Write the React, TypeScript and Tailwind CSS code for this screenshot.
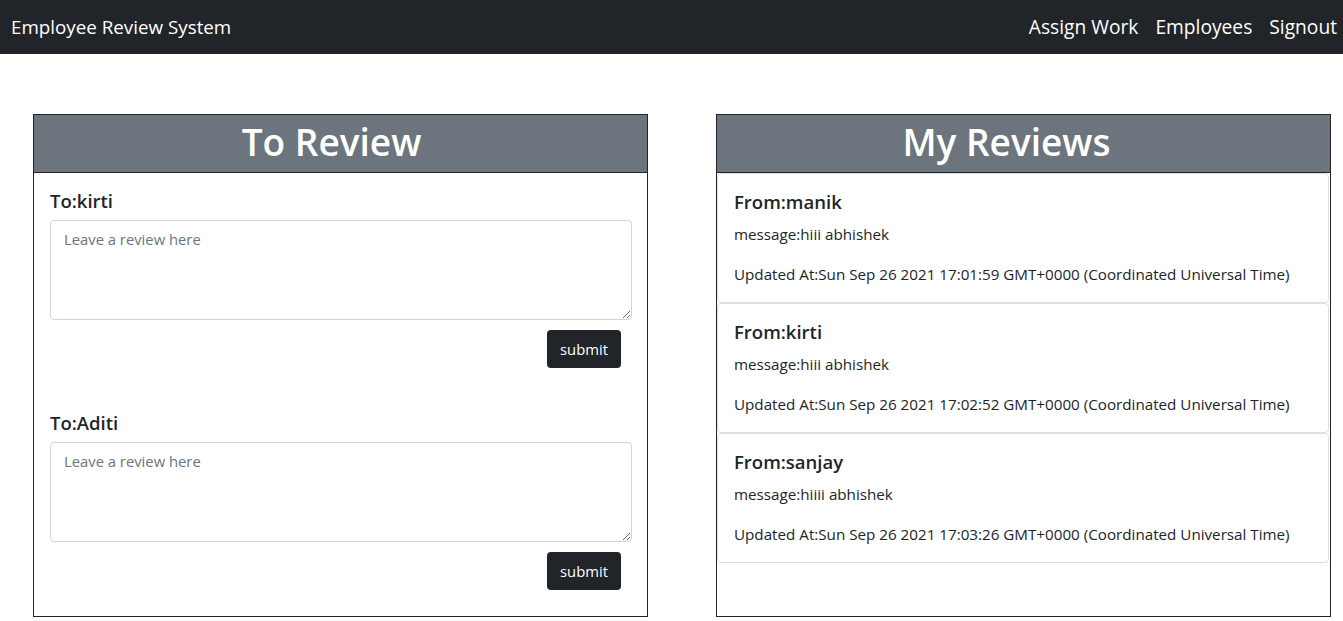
const reviews = [
  { from: "manik", message: "hiii abhishek", at: "Sun Sep 26 2021 17:01:59 GMT+0000 (Coordinated Universal Time)" },
  { from: "kirti", message: "hiii abhishek", at: "Sun Sep 26 2021 17:02:52 GMT+0000 (Coordinated Universal Time)" },
  { from: "sanjay", message: "hiiii abhishek", at: "Sun Sep 26 2021 17:03:26 GMT+0000 (Coordinated Universal Time)" },
];

const toReview = ["kirti", "Aditi"];

const App = () => {
  return (
    <div className="min-h-screen bg-white text-[#212529] font-['Open_Sans',sans-serif]">
      <nav className="h-[54px] bg-[#212529] flex items-center justify-between pl-[11px] pr-[6px] text-white text-[18.8px]">
        <span>Employee Review System</span>
        <div className="flex gap-[17px] text-[19.2px]">
          <a href="#">Assign Work</a>
          <a href="#">Employees</a>
          <a href="#">Signout</a>
        </div>
      </nav>

      <div className="flex gap-[68px] pl-[33px] pt-[60px]">
        <div className="w-[615px] border border-[#212529] flex flex-col">
          <div className="h-[58px] bg-[#6c757d] border-b border-[#212529] flex items-center justify-center pb-[4px] pr-[18px]">
            <h1 className="text-[37px] font-semibold text-white leading-none">To Review</h1>
          </div>
          <div className="pl-[16px] pr-[15px] pt-[16px] pb-[26px] flex flex-col gap-[43px]">
            {toReview.map((name) => (
              <form key={name} className="flex flex-col">
                <label className="text-[18.5px] font-semibold leading-[24px]">To:{name}</label>
                <textarea
                  placeholder="Leave a review here"
                  className="mt-[7px] h-[100px] w-full border border-[#ced4da] rounded-[4px] px-[13px] py-[6px] text-[14.8px] leading-[24px] placeholder:text-[#6c757d] outline-none"
                />
                <div className="flex justify-end mt-[10px] pr-[11px]">
                  <button type="button" className="h-[38px] w-[74px] bg-[#212529] text-white text-[14.8px] rounded-[4px]">
                    submit
                  </button>
                </div>
              </form>
            ))}
          </div>
        </div>

        <div className="w-[615px] border border-[#212529] flex flex-col">
          <div className="h-[58px] bg-[#6c757d] border-b border-[#212529] flex items-center justify-center pb-[4px] pr-[34px]">
            <h1 className="text-[37px] font-semibold text-white leading-none">My Reviews</h1>
          </div>
          <div className="flex flex-col mr-px">
            {reviews.map((r) => (
              <div key={r.from} className="border border-[#dfdfdf] rounded-[4px] p-[16px] h-[130px]">
                <h5 className="text-[18.5px] font-semibold leading-[24px] mb-[8px]">From:{r.from}</h5>
                <p className="text-[15.2px] leading-[24px] mb-[16px]">message:{r.message}</p>
                <p className="text-[15.2px] leading-[24px] whitespace-nowrap">Updated At:{r.at}</p>
              </div>
            ))}
          </div>
        </div>
      </div>
    </div>
  );
};

export default App;
